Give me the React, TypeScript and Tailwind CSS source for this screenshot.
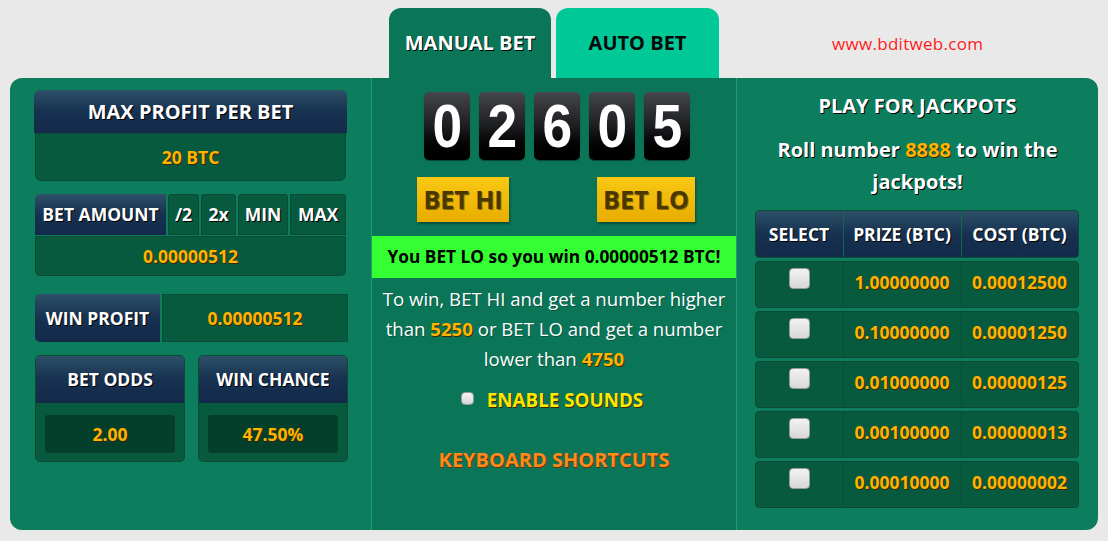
import React from "react";

const navy = "bg-gradient-to-b from-[#2d5068] via-[#173150] to-[#142a4a]";
const ws = "[text-shadow:1px_1px_0_#000]";
const os = "[text-shadow:1px_1px_0_#3a2500]";

function Digit({ d }: { d: string }) {
  return (
    <div className="w-[46px] h-[68px] rounded-[5px] bg-gradient-to-b from-[#45474c] via-[#1d1e20] to-[#000] flex items-center justify-center shadow-[0_1px_1px_rgba(0,0,0,0.4)]">
      <span className="text-white font-bold text-[62px] leading-none font-['Liberation_Sans',Arial,sans-serif] scale-x-[0.86]">{d}</span>
    </div>
  );
}

const rows = [
  ["1.00000000", "0.00012500"],
  ["0.10000000", "0.00001250"],
  ["0.01000000", "0.00000125"],
  ["0.00100000", "0.00000013"],
  ["0.00010000", "0.00000002"],
];

function Check({ cls }: { cls: string }) {
  return <div className={`rounded-[4px] bg-gradient-to-b from-[#f2f2f2] to-[#d8d8d8] border border-[#9a9a9a] ${cls}`} />;
}

export default function App() {
  return (
    <div className="w-[1108px] h-[541px] bg-[#e9e9e9] font-['Open_Sans',sans-serif] overflow-hidden">
      {/* tabs row */}
      <div className="h-[78px] flex items-end pl-[389px]">
        <div className={`w-[162px] h-[70px] rounded-t-[12px] bg-[#0a7557] text-white font-bold text-[20px] flex items-center justify-center ${ws}`}>MANUAL BET</div>
        <div className="ml-[5px] w-[163px] h-[70px] rounded-t-[12px] bg-[#00c897] text-[#0a0a0a] font-bold text-[20px] flex items-center justify-center">AUTO BET</div>
        <div className="self-start mt-[31px] ml-[113px] text-[#ff1a1a] text-[17px] tracking-[0.3px]">www.bditweb.com</div>
      </div>

      {/* main panel */}
      <div className="ml-[10px] w-[1088px] h-[452px] rounded-[12px] bg-[#0d7e5d] flex overflow-hidden">
        {/* left */}
        <div className="w-[361px] pl-[24px] pt-[12px] flex flex-col">
          <div className="w-[313px]">
            <div className={`h-[43px] rounded-t-[6px] ${navy} text-white font-bold text-[20px] flex items-center justify-center ${ws}`}>MAX PROFIT PER BET</div>
            <div className={`ml-px w-[311px] h-[48px] rounded-b-[6px] bg-[#085a3f] border border-[#0a4b35] text-[#ffb400] font-bold text-[17.5px] flex items-center justify-center ${os}`}>20 BTC</div>
          </div>
          <div className="mt-[13px] ml-px w-[311px]">
            <div className="h-[41px] flex gap-[2px] text-white font-bold text-[17.5px]">
              <div className={`w-[131px] rounded-tl-[5px] ${navy} flex items-center justify-center ${ws}`}>BET AMOUNT</div>
              <div className={`w-[31px] bg-[#085a3f] border border-[#0a4b35] rounded-t-[3px] flex items-center justify-center ${ws}`}>/2</div>
              <div className={`w-[35px] bg-[#085a3f] border border-[#0a4b35] rounded-t-[3px] flex items-center justify-center ${ws}`}>2x</div>
              <div className={`w-[50px] bg-[#085a3f] border border-[#0a4b35] rounded-t-[3px] flex items-center justify-center ${ws}`}>MIN</div>
              <div className={`flex-1 bg-[#085a3f] border border-[#0a4b35] rounded-tr-[3px] flex items-center justify-center ${ws}`}>MAX</div>
            </div>
            <div className={`mt-px h-[40px] rounded-b-[5px] bg-[#085a3f] border border-[#0a4b35] text-[#ffb400] font-bold text-[17.5px] flex items-center justify-center ${os}`}>0.00000512</div>
          </div>
          <div className="mt-[18px] ml-px w-[313px] h-[48px] flex text-[17.5px] font-bold">
            <div className={`w-[125px] rounded-l-[5px] ${navy} text-white flex items-center justify-center ${ws}`}>WIN PROFIT</div>
            <div className={`ml-[2px] flex-1 bg-[#085a3f] border border-[#0a4b35] text-[#ffb400] flex items-center justify-center ${os}`}>0.00000512</div>
          </div>
          <div className="mt-[13px] ml-px w-[313px] flex gap-[13px]">
            {[["BET ODDS", "2.00"], ["WIN CHANCE", "47.50%"]].map(([h, v]) => (
              <div key={h} className="w-[150px] h-[107px] rounded-[5px] bg-[#085a3f] border border-[#0a4b35] overflow-hidden flex flex-col">
                <div className={`h-[48px] ${navy} border-b border-[#0a5a40] text-white font-bold text-[17.5px] flex items-center justify-center ${ws}`}>{h}</div>
                <div className="flex-1 px-[8px] pt-[10px]">
                  <div className={`h-[40px] rounded-[4px] bg-[#033f2b] border border-[#0a5a40] text-[#ffb400] font-bold text-[17.5px] flex items-center justify-center ${os}`}>{v}</div>
                </div>
              </div>
            ))}
          </div>
        </div>

        {/* center */}
        <div className="w-[366px] bg-[#0a7557] border-l border-r border-[#1e9d74] flex flex-col items-center">
          <div className="mt-[14px] flex gap-[9px] ml-[6px]">
            {["0", "2", "6", "0", "5"].map((d, i) => (
              <Digit key={i} d={d} />
            ))}
          </div>
          <div className="mt-[17px] w-full flex justify-between pl-[45px] pr-[41px]">
            <div className="w-[92px] h-[45px] bg-gradient-to-b from-[#f8c813] to-[#e8ad00] shadow-[1px_2px_2px_rgba(0,0,0,0.35)] text-[#4a3700] font-bold text-[25px] flex items-center justify-center [text-shadow:1px_1px_0_#8a6a00]">BET HI</div>
            <div className="w-[98px] h-[45px] bg-gradient-to-b from-[#f8c813] to-[#e8ad00] shadow-[1px_2px_2px_rgba(0,0,0,0.35)] text-[#4a3700] font-bold text-[25px] flex items-center justify-center [text-shadow:1px_1px_0_#8a6a00]">BET LO</div>
          </div>
          <div className="mt-[14px] w-full h-[42px] bg-[#33ff33] text-black font-bold text-[17.3px] flex items-center justify-center">You BET LO so you win 0.00000512 BTC!</div>
          <p className="mt-[6px] px-[4px] text-center text-white text-[18.6px] leading-[30px]" style={{ textShadow: "1px 1px 0 rgba(0,0,0,0.3)" }}>
            To win, BET HI and get a number higher than{" "}
            <span className={`text-[#ffb400] font-bold ${os}`}>5250</span> or BET LO and get a number lower than{" "}
            <span className={`text-[#ffb400] font-bold ${os}`}>4750</span>
          </p>
          <div className="mt-[12px] flex items-center ml-[-4px]">
            <Check cls="w-[13px] h-[13px] rounded-[2px] mt-[-4px]" />
            <span className={`ml-[13px] text-[#ffe600] font-bold text-[18.8px] ${os}`}>ENABLE SOUNDS</span>
          </div>
          <div className="mt-[31px] text-[#ff8a1a] font-bold text-[20px] [text-shadow:1px_1px_0_#6a3000]">KEYBOARD SHORTCUTS</div>
        </div>

        {/* right */}
        <div className="flex-1 flex flex-col items-center pt-[14px]">
          <div className={`text-white font-bold text-[20px] leading-[28px] ${ws}`}>PLAY FOR JACKPOTS</div>
          <div className={`mt-[14px] w-[310px] text-center text-white font-bold text-[20px] leading-[32px] ${ws}`}>
            Roll number <span className={`text-[#ffb400] ${os}`}>8888</span> to win the jackpots!
          </div>
          <div className="mt-[12px] w-[324px] mr-[2px]">
            <div className={`h-[48px] flex rounded-[4px] ${navy} border border-[#0a4b35] text-white font-bold text-[17.5px] ${ws}`}>
              <div className="w-[88px] flex items-center justify-center border-r border-[#0e6a4c]">SELECT</div>
              <div className="w-[118px] flex items-center justify-center border-r border-[#0e6a4c]">PRIZE (BTC)</div>
              <div className="flex-1 flex items-center justify-center">COST (BTC)</div>
            </div>
            {rows.map(([p, c]) => (
              <div key={p} className={`mt-[3px] h-[47px] flex rounded-[4px] bg-[#085a3f] border border-[#0a4b35] text-[#ffb400] font-bold text-[17.5px] ${os}`}>
                <div className="w-[88px] flex justify-center pt-[6px] border-r border-[#0a4b35]">
                  <Check cls="w-[21px] h-[21px]" />
                </div>
                <div className="w-[118px] flex items-center justify-center border-r border-[#0a4b35] pb-[4px]">{p}</div>
                <div className="flex-1 flex items-center justify-center pb-[4px]">{c}</div>
              </div>
            ))}
          </div>
        </div>
      </div>
    </div>
  );
}
